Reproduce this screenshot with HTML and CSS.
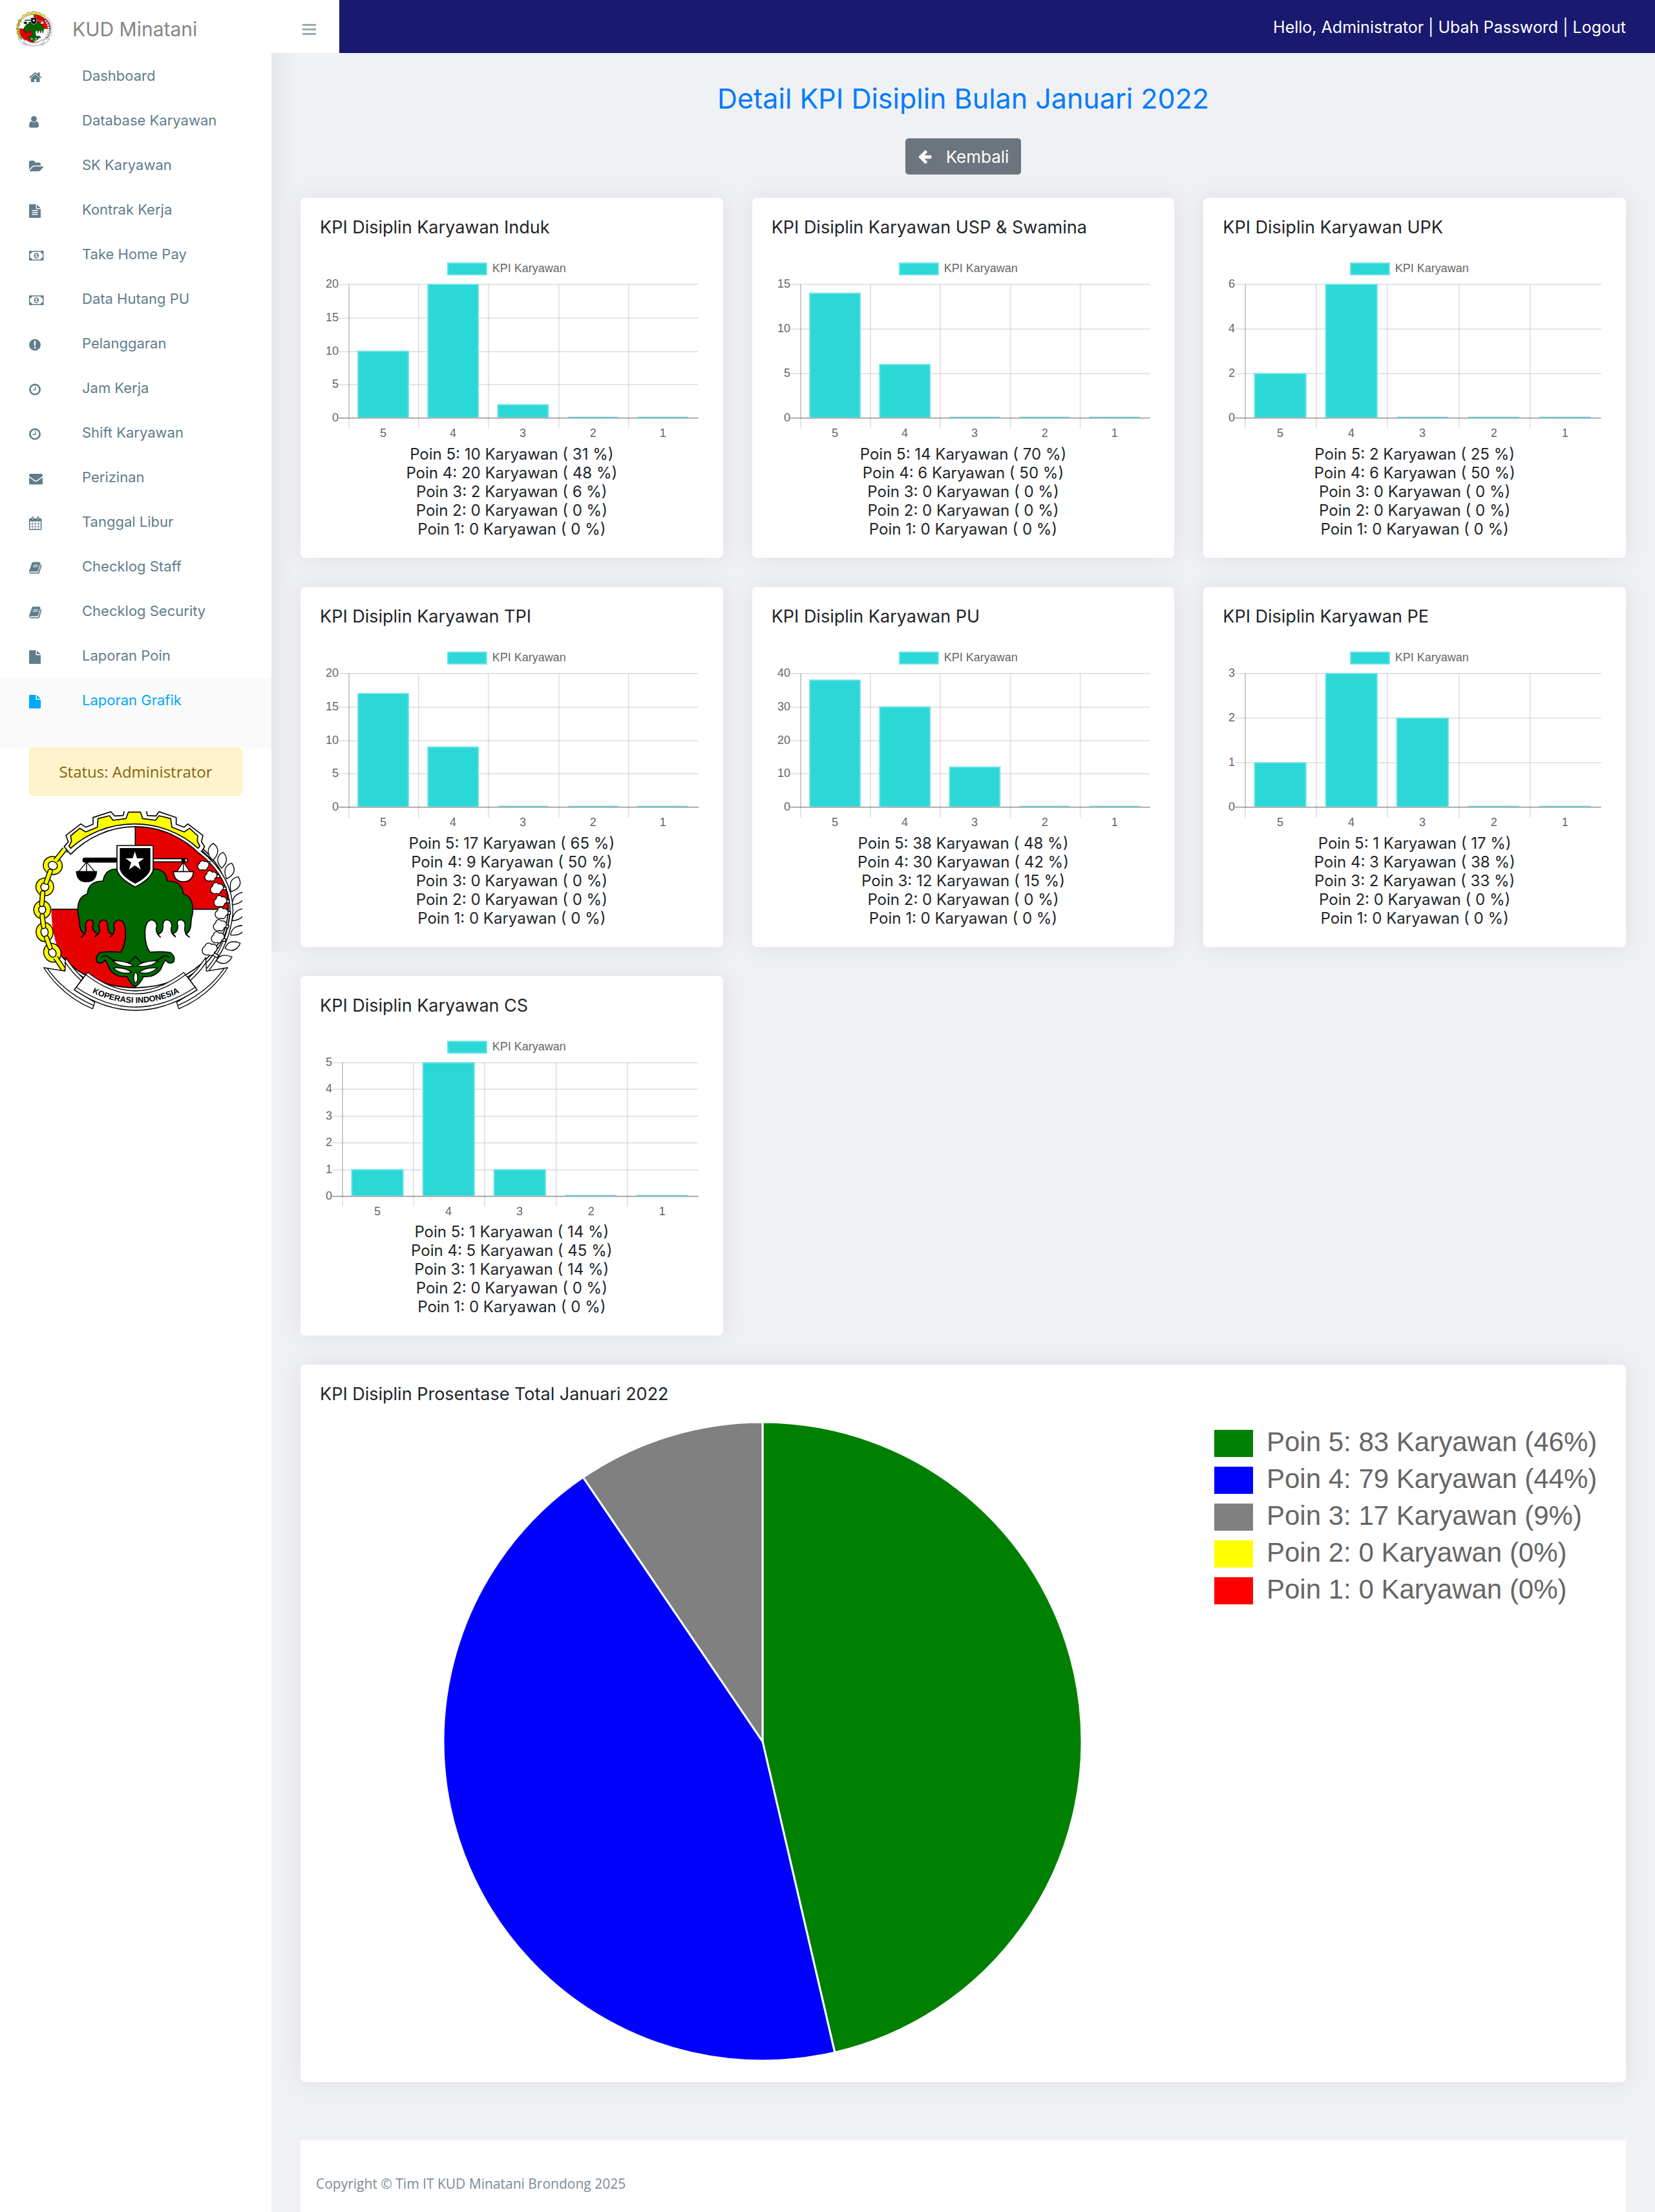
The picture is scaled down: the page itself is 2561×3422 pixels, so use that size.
FILE: index.html
```html
<!DOCTYPE html>
<html lang="id">
<head>
<meta charset="utf-8">
<meta name="viewport" content="width=device-width, initial-scale=1">
<title>KUD Minatani - Detail KPI Disiplin</title>
<link rel="stylesheet" href="styles.css">
</head>
<body>
<svg class="defs" aria-hidden="true">
  <symbol id="i-home" viewBox="64 0 2048 1792"><path d="M1472 992v480q0 26-19 45t-45 19h-384v-384h-256v384h-384q-26 0-45-19t-19-45v-480q0-1 .5-3t.5-3l575-474 575 474q1 2 1 6zm223-69l-62 74q-8 9-21 11h-3q-13 0-21-7l-692-577-692 577q-12 8-24 7-13-2-21-11l-62-74q-8-10-7-23.500t11-21.500l719-599q32-26 76-26t76 26l244 204v-195q0-14 9-23t23-9h192q14 0 23 9t9 23v408l219 182q10 8 11 21.500t-7 23.500z"/></symbol>
  <symbol id="i-user" viewBox="256 0 2048 1792"><path d="M1536 1399q0 109-62.500 187t-150.500 78h-854q-88 0-150.500-78t-62.500-187q0-85 8.500-160.500t31.500-152 58.500-131 94-89 134.500-34.500q131 128 313 128t313-128q76 0 134.500 34.500t94 89 58.500 131 31.500 152 8.500 160.500zm-256-887q0 159-112.500 271.500t-271.500 112.500-271.500-112.500-112.500-271.500 112.500-271.500 271.500-112.500 271.500 112.500 112.500 271.500z"/></symbol>
  <symbol id="i-folder" viewBox="0 0 2048 1792"><path d="M1879 952q0 31-31 66l-336 396q-43 51-120.500 86.500t-143.500 35.500h-1088q-34 0-60.500-13t-26.500-43q0-31 31-66l336-396q43-51 120.500-86.500t143.500-35.500h1088q34 0 60.500 13t26.500 43zm-343-344v160h-832q-94 0-197 47.500t-164 119.500l-337 396-5 6q0-4-.5-12.500t-.5-12.500v-960q0-92 66-158t158-66h320q92 0 158 66t66 158v32h544q92 0 158 66t66 158z"/></symbol>
  <symbol id="i-filetext" viewBox="128 0 2048 1792"><path fill-rule="evenodd" d="M1596 476q14 14 28 36h-472v-472q22 14 36 28zM1120 640h544v1056q0 40-28 68t-68 28h-1344q-40 0-68-28t-28-68v-1600q0-40 28-68t68-28h800v544q0 40 28 68t68 28zM512 768v128h768v-128zM512 1024v128h768v-128zM512 1280v128h768v-128z"/></symbol>
  <symbol id="i-file" viewBox="128 0 2048 1792"><path d="M1152 512v-472q22 14 36 28l408 408q14 14 28 36h-472zm-128 32q0 40 28 68t68 28h544v1056q0 40-28 68t-68 28h-1344q-40 0-68-28t-28-68v-1600q0-40 28-68t68-28h800v544z"/></symbol>
  <symbol id="i-money" viewBox="0 0 2048 1792"><path fill-rule="evenodd" d="M64 256h1792q64 0 64 64v1152q0 64-64 64h-1792q-64 0-64-64v-1152q0-64 64-64zM384 384q0 106-75 181t-181 75v512q106 0 181 75t75 181h1152q0-106 75-181t181-75v-512q-106 0-181-75t-75-181zM960 512c180 0 320 170 320 384s-140 384-320 384-320-170-320-384 140-384 320-384zM900 640l-130 110 70 82 60-48v240h-120v112h384v-112h-120v-384z"/></symbol>
  <symbol id="i-exclaim" viewBox="128 0 2048 1792"><path fill-rule="evenodd" d="M896 128a768 768 0 1 1 0 1536a768 768 0 1 1 0-1536zM780 380l28 640h176l28-640zM792 1150v226h208v-226z"/></symbol>
  <symbol id="i-clock" viewBox="128 0 2048 1792"><path fill-rule="evenodd" d="M896 128a768 768 0 1 1 0 1536a768 768 0 1 1 0-1536zM896 352a544 544 0 1 0 0 1088a544 544 0 1 0 0-1088zM896 512h96q32 0 32 32v448q0 32-32 32h-320q-32 0-32-32v-64q0-32 32-32h224z"/></symbol>
  <symbol id="i-mail" viewBox="0 0 2048 1792"><path d="M1792 710v794q0 66-47 113t-113 47h-1472q-66 0-113-47t-47-113v-794q44 49 101 87 362 246 497 345 57 42 92.500 65.500t94.500 48 110 24.500h2q51 0 110-24.500t94.500-48 92.500-65.500q170-123 498-345 57-39 100-87zm0-294q0 79-49 151t-122 123q-376 261-468 325-10 7-42.500 31t-54 38.500-52 32.500-57.500 27-50 9h-2q-23 0-50-9t-57.500-27-52-32.500-54-38.500-42.500-31q-91-64-262-182.500t-205-142.500q-62-42-117-115.500t-55-136.500q0-78 41.500-130t118.500-52h1472q65 0 112.500 47t47.500 113z"/></symbol>
  <symbol id="i-calendar" viewBox="64 0 2048 1792"><path fill-rule="evenodd" d="M192 256h192v-96q0-160 160-160t160 160v96h384v-96q0-160 160-160t160 160v96h192q128 0 128 128v1280q0 128-128 128h-1408q-128 0-128-128v-1280q0-128 128-128zM192 640v288h288v-288zM544 640v288h320v-288zM928 640v288h320v-288zM1312 640v288h288v-288zM192 992v320h288v-320zM544 992v320h320v-320zM928 992v320h320v-320zM1312 992v320h288v-320zM192 1376v288h288v-288zM544 1376v288h320v-288zM928 1376v288h320v-288zM1312 1376v288h288v-288zM512 128v320h64v-320zM1216 128v320h64v-320z"/></symbol>
  <symbol id="i-book" viewBox="64 0 2048 1792"><path fill-rule="evenodd" d="M1703 478q40 57 18 129l-275 906q-19 64-76.500 107.500t-122.500 43.500h-923q-77 0-148.500-53.500t-99.500-131.500q-24-67-2-127l18-110 320-930q40-184 200-184h760q100 0 148 64t22 150l-272 890q-40 150-190 150h-900q-40 0-20 60 20 70 130 70h920q60 0 80-60l310-990q20-40 0-60 70 20 103 76zM640 480l-30 96h640l30-96zM570 700l-30 96h640l30-96z"/></symbol>
  <symbol id="i-arrow" viewBox="64 0 1792 1792"><path d="M1664 896v128q0 53-32.500 90.500t-84.500 37.500h-704l293 294q38 36 38 90t-38 90l-75 76q-37 37-90 37-52 0-91-37l-651-652q-37-37-37-90 0-52 37-91l651-650q38-38 91-38 52 0 90 38l75 74q38 38 38 91t-38 91l-293 293h704q52 0 84.500 37.500t32.500 90.500z"/></symbol>
  <symbol id="emblem" viewBox="135 376 990 930">
    <g stroke="#000" stroke-width="5" stroke-linejoin="round" fill="#fff">
      <ellipse cx="628" cy="822" rx="440" ry="388"/>
      <ellipse cx="628" cy="820" rx="432" ry="375"/>
      <path fill="#e60000" d="M628 445A432 375 0 0 1 1060 831H628z"/>
      <path fill="#e60000" d="M628 1195A432 375 0 0 1 196 831H628z"/>
      <path d="M328 576L298 540L317 518L306 488L375 435L398 450L432 437V405L515 378L532 398L572 396L578 365H678L684 396L724 398L738 378L818 405V437L855 450L872 435L942 488L935 518L950 540L928 576A425 440 0 0 0 328 576z"/>
      <path fill="#ff0" d="M328 548L320 538L332 515L328 490L370 455L398 472L452 450L455 410L508 397L525 418L585 410L596 380H652L662 410L722 418L738 397L792 410L798 450L855 472L880 455L918 490L916 515L928 538L920 548A425 400 0 0 0 328 548z"/>
    </g>
    <path fill="#fff" d="M298 560L330 580Q240 680 238 831Q240 980 300 1080L300 1112L240 1090Q170 960 170 831Q170 690 298 560z"/>
    <g fill="none" stroke="#000" stroke-width="27">
      <ellipse cx="245" cy="628" rx="33" ry="30" transform="rotate(20 245 628)"/>
      <ellipse cx="208" cy="727" rx="30" ry="30" transform="rotate(10 208 727)"/>
      <ellipse cx="196" cy="833" rx="28" ry="30"/>
      <ellipse cx="207" cy="937" rx="28" ry="33" transform="rotate(-8 207 937)"/>
      <ellipse cx="243" cy="1033" rx="28" ry="33" transform="rotate(-25 243 1033)"/>
    </g>
    <g fill="none" stroke="#ff0" stroke-width="18">
      <ellipse cx="245" cy="628" rx="33" ry="30" transform="rotate(20 245 628)"/>
      <ellipse cx="208" cy="727" rx="30" ry="30" transform="rotate(10 208 727)"/>
      <ellipse cx="196" cy="833" rx="28" ry="30"/>
      <ellipse cx="207" cy="937" rx="28" ry="33" transform="rotate(-8 207 937)"/>
      <ellipse cx="243" cy="1033" rx="28" ry="33" transform="rotate(-25 243 1033)"/>
    </g>
    <g fill="none" stroke="#000" stroke-width="25" stroke-linecap="round">
      <path stroke-linecap="butt" d="M300 552L258 605M258 1055L298 1115"/>
      <path d="M233 655L215 705M198 755L194 808M196 862L202 910M216 964L232 1008"/>
      <path stroke="#ff0" stroke-width="16" stroke-linecap="butt" d="M300 552L258 605M256 1052L296 1112"/>
      <path stroke="#ff0" stroke-width="16" d="M233 655L215 705M198 755L194 808M196 862L202 910M216 964L232 1008"/>
    </g>
    <g fill="none" stroke="#000" stroke-width="17">
      <path d="M928 565Q1075 680 1075 840Q1065 990 965 1110"/>
      <path stroke="#fff" stroke-width="9" d="M926 563Q1075 680 1075 840Q1065 990 962 1114"/>
    </g>
    <g fill="#fff" stroke="#000" stroke-width="4">
      <path d="M988 603C958 575 960 545 990 525C1018 545 1018 575 988 603z"/>
      <path d="M1028 640C1000 610 1008 578 1036 567C1060 590 1054 620 1028 640z"/>
      <path d="M1052 690C1035 650 1046 625 1076 617C1096 645 1090 670 1052 690z"/>
      <path d="M1072 750C1062 705 1076 685 1106 680C1124 710 1116 735 1072 750z"/>
      <path d="M1078 810C1078 775 1096 755 1140 750C1140 785 1120 805 1078 810z"/>
      <path d="M1078 885C1080 850 1100 830 1140 826C1140 860 1120 880 1078 885z"/>
      <path d="M1070 950C1076 915 1100 905 1140 906C1134 940 1110 955 1070 950z"/>
      <path d="M1045 1012C1056 980 1080 975 1115 988C1104 1020 1075 1032 1045 1012z"/>
      <path d="M1004 1070C1020 1040 1045 1040 1077 1052C1060 1084 1035 1092 1004 1070z"/>
      <path d="M950 610h25l-4 14h-20zM990 672h30v12h-30zM1020 728h30v12h-30zM1030 788h35v12h-35zM1040 842h30v12h-30zM1035 900l28 6-3 12-28-6zM1022 960l28 10-5 12-28-10zM985 1030l30 14-6 12-28-14z"/>
    </g>
    <g fill="#fff" stroke="#000" stroke-width="4">
      <path d="M926 618a14 14 0 0 1 24-8a15 15 0 0 1 14 26a14 14 0 0 1-22 11a15 15 0 0 1-16-29z"/>
      <path d="M960 667a14 14 0 0 1 26-8a15 15 0 0 1 12 28a14 14 0 0 1-22 11a15 15 0 0 1-16-31z"/>
      <path d="M988 722a14 14 0 0 1 26-8a15 15 0 0 1 12 32a14 14 0 0 1-22 11a15 15 0 0 1-16-35z"/>
      <path d="M1004 782a14 14 0 0 1 26-8a15 15 0 0 1 12 32a14 14 0 0 1-22 11a15 15 0 0 1-16-35z"/>
      <path d="M1010 837a14 14 0 0 1 26-8a15 15 0 0 1 12 32a14 14 0 0 1-22 11a15 15 0 0 1-16-35z"/>
      <path d="M1002 894a14 14 0 0 1 26-8a15 15 0 0 1 12 32a14 14 0 0 1-22 11a15 15 0 0 1-16-35z"/>
      <path d="M992 950a14 14 0 0 1 26-8a15 15 0 0 1 12 32a14 14 0 0 1-22 11a15 15 0 0 1-16-35z"/>
      <path d="M952 1002a17 17 0 0 1 30-8a18 18 0 0 1 14 36a17 17 0 0 1-28 12a18 18 0 0 1-16-40z"/>
    </g>
    <g stroke="#000" stroke-width="5" stroke-linejoin="round">
      <g fill="#060">
        <path d="M628 640L545 645Q490 640 478 700Q410 700 405 760Q355 775 362 850Q370 880 370 905Q372 935 394 946Q378 960 376 960Q402 945 398 915Q392 885 415 880Q440 878 430 910Q430 935 454 945Q440 958 442 958Q468 940 460 915Q455 885 480 880Q500 880 500 910Q498 940 524 947Q510 960 512 960Q538 935 528 910Q528 885 552 880Q582 885 583 940Q583 1000 560 1030Q500 1025 465 1032Q440 1050 450 1075Q470 1090 488 1066Q500 1085 510 1110Q540 1150 590 1143Q600 1170 628 1192"/>
        <path transform="matrix(-1 0 0 1 1256 0)" d="M628 640L545 645Q490 640 478 700Q410 700 405 760Q355 775 362 850Q370 880 370 905Q372 935 394 946Q378 960 376 960Q402 945 398 915Q392 885 415 880Q440 878 430 910Q430 935 454 945Q440 958 442 958Q468 940 460 915Q455 885 480 880Q500 880 500 910Q498 940 524 947Q510 960 512 960Q538 935 528 910Q528 885 552 880Q582 885 583 940Q583 1000 560 1030Q500 1025 465 1032Q440 1050 450 1075Q470 1090 488 1066Q500 1085 510 1110Q540 1150 590 1143Q600 1170 628 1192"/>
        <path stroke="none" d="M618 650h20v530h-20z"/>
      </g>
      <path fill="none" d="M470 1055Q490 1035 515 1062Q560 1078 600 1078L628 1050L656 1078Q700 1078 741 1062Q766 1035 786 1055"/>
      <g fill="#fff" stroke-width="4">
        <path d="M522 1070Q560 1104 620 1094Q590 1070 522 1070zM525 1104Q565 1136 610 1124Q580 1098 525 1104z"/>
        <path d="M734 1070Q696 1104 636 1094Q666 1070 734 1070zM731 1104Q691 1136 646 1124Q676 1098 731 1104z"/>
        <ellipse cx="630" cy="1148" rx="9" ry="24"/>
      </g>
      <rect x="385" y="594" width="160" height="18" rx="9" fill="#000"/>
      <rect x="705" y="596" width="166" height="15" rx="7" fill="#fff"/>
      <circle cx="851" cy="604" r="7" fill="#000"/>
      <path fill="#fff" stroke-width="4" d="M402 612L365 657H440zM402 612V657M851 612L820 657H882zM851 612V657"/>
      <path fill="#000" d="M355 656H448Q446 703 402 703Q358 703 355 656z"/>
      <path fill="#fff" d="M805 656H898Q895 703 851 703Q808 703 805 656z"/>
      <path fill="#fff" d="M543 535H711V650Q700 690 628 728Q555 690 543 650z"/>
      <path fill="#000" stroke="none" d="M556 547H698V645Q690 680 628 712Q566 680 556 645z"/>
      <path fill="#fff" stroke="none" d="M626 563L636 594H669L643 614L653 647L626 627L599 647L609 614L583 594H616z"/>
      <g fill="#fff" stroke-width="4">
        <path d="M203 1102L302 1118L305 1055Q345 1115 385 1150L345 1205L440 1262L430 1293Q290 1235 203 1102z"/>
        <path d="M1057 1102L958 1118L955 1055Q915 1115 875 1150L915 1205L820 1262L830 1293Q970 1235 1057 1102z"/>
        <path fill="none" d="M220 1106Q300 1220 436 1278M1040 1106Q960 1220 824 1278M305 1080Q335 1125 375 1160M955 1080Q925 1125 885 1160"/>
        <path d="M407 1124Q628 1296 853 1124L915 1205Q628 1395 345 1205z"/>
        <path fill="none" d="M400 1136Q628 1312 860 1136M352 1192Q628 1378 908 1192"/>
      </g>
    </g>
  </symbol>
</svg>

<header class="topbar">
  <a class="brand" href="#"><svg class="brand-logo" aria-hidden="true"><use href="#emblem"/></svg><span>KUD Minatani</span></a>
  <button class="toggle" type="button" aria-label="Menu"><i></i><i></i><i></i></button>
  <div class="userbar"><span>Hello, Administrator | <a href="#">Ubah Password</a> | <a href="#">Logout</a></span></div>
</header>

<div class="layout">
  <aside class="sidebar">
    <nav>
      <ul class="menu">
        <li><a href="#"><svg><use href="#i-home"/></svg>Dashboard</a></li>
        <li><a href="#"><svg><use href="#i-user"/></svg>Database Karyawan</a></li>
        <li><a href="#"><svg><use href="#i-folder"/></svg>SK Karyawan</a></li>
        <li><a href="#"><svg><use href="#i-filetext"/></svg>Kontrak Kerja</a></li>
        <li><a href="#"><svg><use href="#i-money"/></svg>Take Home Pay</a></li>
        <li><a href="#"><svg><use href="#i-money"/></svg>Data Hutang PU</a></li>
        <li><a href="#"><svg><use href="#i-exclaim"/></svg>Pelanggaran</a></li>
        <li><a href="#"><svg><use href="#i-clock"/></svg>Jam Kerja</a></li>
        <li><a href="#"><svg><use href="#i-clock"/></svg>Shift Karyawan</a></li>
        <li><a href="#"><svg><use href="#i-mail"/></svg>Perizinan</a></li>
        <li><a href="#"><svg><use href="#i-calendar"/></svg>Tanggal Libur</a></li>
        <li><a href="#"><svg><use href="#i-book"/></svg>Checklog Staff</a></li>
        <li><a href="#"><svg><use href="#i-book"/></svg>Checklog Security</a></li>
        <li><a href="#"><svg><use href="#i-file"/></svg>Laporan Poin</a></li>
        <li class="active"><a href="#"><svg><use href="#i-file"/></svg>Laporan Grafik</a></li>
      </ul>
    </nav>
    <div class="status">Status: Administrator</div>
    <svg class="emblem" viewBox="135 376 990 930">
      <use href="#emblem" x="135" y="376" width="990" height="930"/>
      <path id="band" fill="none" d="M405 1207Q628 1324 856 1207"/>
      <text class="band-text"><textPath href="#band" startOffset="50%" text-anchor="middle">KOPERASI INDONESIA</textPath></text>
    </svg>
  </aside>

  <main class="content">
    <h1>Detail KPI Disiplin Bulan Januari 2022</h1>
    <button class="back" type="button"><svg aria-hidden="true"><use href="#i-arrow"/></svg>Kembali</button>

    <div class="cards">
      <section class="card">
        <h2>KPI Disiplin Karyawan Induk</h2>
        <svg class="chart" viewBox="0 0 594 297" data-values="10,20,2,0,0" data-max="20" data-step="5"></svg>
        <p>Poin 5: 10 Karyawan ( 31 %)</p><p>Poin 4: 20 Karyawan ( 48 %)</p><p>Poin 3: 2 Karyawan ( 6 %)</p><p>Poin 2: 0 Karyawan ( 0 %)</p><p>Poin 1: 0 Karyawan ( 0 %)</p>
      </section>
      <section class="card">
        <h2>KPI Disiplin Karyawan USP &amp; Swamina</h2>
        <svg class="chart" viewBox="0 0 594 297" data-values="14,6,0,0,0" data-max="15" data-step="5"></svg>
        <p>Poin 5: 14 Karyawan ( 70 %)</p><p>Poin 4: 6 Karyawan ( 50 %)</p><p>Poin 3: 0 Karyawan ( 0 %)</p><p>Poin 2: 0 Karyawan ( 0 %)</p><p>Poin 1: 0 Karyawan ( 0 %)</p>
      </section>
      <section class="card">
        <h2>KPI Disiplin Karyawan UPK</h2>
        <svg class="chart" viewBox="0 0 594 297" data-values="2,6,0,0,0" data-max="6" data-step="2"></svg>
        <p>Poin 5: 2 Karyawan ( 25 %)</p><p>Poin 4: 6 Karyawan ( 50 %)</p><p>Poin 3: 0 Karyawan ( 0 %)</p><p>Poin 2: 0 Karyawan ( 0 %)</p><p>Poin 1: 0 Karyawan ( 0 %)</p>
      </section>
      <section class="card">
        <h2>KPI Disiplin Karyawan TPI</h2>
        <svg class="chart" viewBox="0 0 594 297" data-values="17,9,0,0,0" data-max="20" data-step="5"></svg>
        <p>Poin 5: 17 Karyawan ( 65 %)</p><p>Poin 4: 9 Karyawan ( 50 %)</p><p>Poin 3: 0 Karyawan ( 0 %)</p><p>Poin 2: 0 Karyawan ( 0 %)</p><p>Poin 1: 0 Karyawan ( 0 %)</p>
      </section>
      <section class="card">
        <h2>KPI Disiplin Karyawan PU</h2>
        <svg class="chart" viewBox="0 0 594 297" data-values="38,30,12,0,0" data-max="40" data-step="10"></svg>
        <p>Poin 5: 38 Karyawan ( 48 %)</p><p>Poin 4: 30 Karyawan ( 42 %)</p><p>Poin 3: 12 Karyawan ( 15 %)</p><p>Poin 2: 0 Karyawan ( 0 %)</p><p>Poin 1: 0 Karyawan ( 0 %)</p>
      </section>
      <section class="card">
        <h2>KPI Disiplin Karyawan PE</h2>
        <svg class="chart" viewBox="0 0 594 297" data-values="1,3,2,0,0" data-max="3" data-step="1"></svg>
        <p>Poin 5: 1 Karyawan ( 17 %)</p><p>Poin 4: 3 Karyawan ( 38 %)</p><p>Poin 3: 2 Karyawan ( 33 %)</p><p>Poin 2: 0 Karyawan ( 0 %)</p><p>Poin 1: 0 Karyawan ( 0 %)</p>
      </section>
      <section class="card">
        <h2>KPI Disiplin Karyawan CS</h2>
        <svg class="chart" viewBox="0 0 594 297" data-values="1,5,1,0,0" data-max="5" data-step="1"></svg>
        <p>Poin 5: 1 Karyawan ( 14 %)</p><p>Poin 4: 5 Karyawan ( 45 %)</p><p>Poin 3: 1 Karyawan ( 14 %)</p><p>Poin 2: 0 Karyawan ( 0 %)</p><p>Poin 1: 0 Karyawan ( 0 %)</p>
      </section>
      <section class="card wide">
        <h2>KPI Disiplin Prosentase Total Januari 2022</h2>
        <div class="total">
          <svg class="pie" viewBox="0 0 1370 995" data-values="83,79,17" data-colors="green,blue,gray"></svg>
          <ul class="legend">
            <li><i class="green"></i>Poin 5: 83 Karyawan (46%)</li>
            <li><i class="blue"></i>Poin 4: 79 Karyawan (44%)</li>
            <li><i class="gray"></i>Poin 3: 17 Karyawan (9%)</li>
            <li><i class="yellow"></i>Poin 2: 0 Karyawan (0%)</li>
            <li><i class="red"></i>Poin 1: 0 Karyawan (0%)</li>
          </ul>
        </div>
      </section>
    </div>
    <footer>Copyright © Tim IT KUD Minatani Brondong 2025</footer>
  </main>
</div>
<script src="charts.js"></script>
</body>
</html>
```
FILE: charts.js
```js
const NS = 'http://www.w3.org/2000/svg';

function add(svg, tag, cls, attrs, text) {
  const el = document.createElementNS(NS, tag);
  el.setAttribute('class', cls);
  for (const key in attrs) el.setAttribute(key, attrs[key]);
  if (text !== undefined) el.textContent = text;
  svg.appendChild(el);
}

function drawBars(svg) {
  const values = svg.dataset.values.split(',').map(Number);
  const max = Number(svg.dataset.max);
  const step = Number(svg.dataset.step);
  const labelEnd = max > 9 ? 29 : 19;
  const left = labelEnd + 16;
  const right = 586, top = 49, bottom = 256;
  const pitch = (right - left) / values.length;
  const width = pitch * 0.72;
  const yOf = v => bottom - (bottom - top) * v / max;

  add(svg, 'rect', 'bar', { x: 198, y: 16, width: 60, height: 18 });
  add(svg, 'text', 'tick', { x: 267, y: 30 }, 'KPI Karyawan');

  for (let v = 0; v <= max; v += step) {
    const y = Math.round(yOf(v));
    add(svg, 'path', v ? 'grid' : 'grid zero', { d: `M${labelEnd} ${y}H${right}` });
    add(svg, 'text', 'tick end', { x: labelEnd, y: y + 5 }, v);
  }
  values.forEach((v, i) => {
    const x = Math.round(left + pitch * i);
    add(svg, 'path', i ? 'grid' : 'grid first', { d: `M${x} ${top}V${bottom}` });
    add(svg, 'path', 'grid', { d: `M${x} ${bottom}V272` });
    add(svg, 'text', 'tick mid', { x: x + pitch / 2 - 1, y: 285 }, values.length - i);
    const bx = left + pitch * i + (pitch - width) / 2 - 1;
    if (v) {
      add(svg, 'path', 'bar', { d: `M${bx} ${bottom - 1}V${yOf(v)}H${bx + width}V${bottom - 1}` });
    } else {
      add(svg, 'path', 'flat', { d: `M${bx} ${bottom - 1}h${width}` });
    }
  });
}

function drawPie(svg) {
  const values = svg.dataset.values.split(',').map(Number);
  const colors = svg.dataset.colors.split(',');
  const sum = values.reduce((a, b) => a + b, 0);
  const cx = 685, cy = 498, r = 494;
  let angle = 0;
  const point = a => `${cx + r * Math.sin(a)} ${cy - r * Math.cos(a)}`;
  values.forEach((v, i) => {
    const next = angle + v / sum * 2 * Math.PI;
    const large = next - angle > Math.PI ? 1 : 0;
    add(svg, 'path', 'slice ' + colors[i], { d: `M${cx} ${cy}L${point(angle)}A${r} ${r} 0 ${large} 1 ${point(next)}Z` });
    angle = next;
  });
}

document.querySelectorAll('.chart').forEach(drawBars);
document.querySelectorAll('.pie').forEach(drawPie);
```
FILE: styles.css
```css
* { box-sizing: border-box; }
body {
  margin: 0;
  min-height: 100vh;
  display: flex;
  flex-direction: column;
  background: #fff;
  color: #212529;
  font-family: Inter, "Open Sans", sans-serif;
}
h1, h2, p, ul { margin: 0; padding: 0; font-weight: 400; }
ul { list-style: none; }
a { color: inherit; text-decoration: none; }
button { font: inherit; border: 0; cursor: pointer; }
.defs { position: absolute; width: 0; height: 0; }

/* Top bar */
.topbar { display: flex; height: 82px; }
.brand {
  width: 420px;
  padding-left: 24px;
  display: flex;
  align-items: center;
  gap: 31px;
  padding-top: 8px;
  color: #868686;
  font-size: 30px;
  line-height: 40px;
}
.brand-logo { width: 57px; height: 56px; }
.toggle {
  width: 105px;
  padding: 8px 36px 0 48px;
  background: none;
  display: flex;
  flex-direction: column;
  justify-content: center;
  gap: 4px;
}
.toggle i { display: block; height: 3px; background: #99abb4; }
.userbar {
  flex: 1;
  padding: 2px 45px 0 0;
  display: flex;
  align-items: center;
  justify-content: flex-end;
  background: #191970;
  color: #fff;
  font-size: 25px;
}

.layout { flex: 1; display: grid; grid-template-columns: 420px 1fr; }

/* Sidebar */
.menu a {
  height: 69px;
  padding-left: 45px;
  display: flex;
  align-items: center;
  gap: 58px;
  color: #607d8b;
  font-size: 22px;
}
.menu svg { width: 24px; height: 21px; margin-top: 6px; fill: currentColor; }
.menu .active { padding-bottom: 40px; background: #fafafa; }
.menu .active a { color: #03a9f4; }
.status {
  margin: 0 45px 24px;
  padding: 20px 0;
  border: 1px solid #ffeeba;
  border-radius: 6px;
  background: #fff3cd;
  color: #856404;
  font: 24px/32px "Open Sans", sans-serif;
  text-align: center;
}
.emblem { display: block; width: 330px; height: 310px; margin-left: 45px; }
.band-text { font: bold 38px "Liberation Sans", sans-serif; fill: #000; }

/* Content */
.content {
  padding: 44px 45px 0;
  display: flex;
  flex-direction: column;
  background: linear-gradient(to right, rgba(0, 0, 0, .04), rgba(0, 0, 0, 0)) no-repeat 0 0 / 36px 1390px #f0f1f5;
}
h1 { color: #007bff; font-size: 43px; line-height: 52px; text-align: center; }
.back {
  align-self: center;
  height: 56px;
  margin: 36px 0;
  padding: 0 19px;
  display: flex;
  align-items: center;
  gap: 20px;
  border-radius: 5px;
  background: #6c757d;
  color: #fff;
  font-size: 26px;
}
.back svg { width: 24px; height: 24px; fill: #fff; }

.cards { display: grid; grid-template-columns: repeat(3, 1fr); gap: 45px; margin-bottom: 45px; }
.card {
  min-width: 0;
  padding: 30px;
  border-radius: 7px;
  background: #fff;
  box-shadow: 0 0 36px rgba(0, 0, 0, .08);
  text-align: center;
  font-size: 24px;
  line-height: 29px;
}
.wide { grid-column: 1 / -1; }
h2 { margin-bottom: 23px; font-size: 27px; line-height: 32px; text-align: left; }
.chart { display: block; width: 100%; }
.tick { font: 18px "Liberation Sans", sans-serif; fill: #666; }
.end { text-anchor: end; }
.mid { text-anchor: middle; }
.grid { stroke: rgba(0, 0, 0, .1); stroke-width: 2; fill: none; }
.first { stroke: rgba(0, 0, 0, .2); }
.zero { stroke: rgba(0, 0, 0, .33); }
.bar { fill: #2cd7d7; stroke: #6fe3e3; stroke-width: 2; }
.flat { stroke: #6cc5c7; stroke-width: 2; }

.total { display: flex; gap: 14px; }
.pie { flex: 1; min-width: 0; display: block; }
.slice { stroke: #fff; stroke-width: 3; }
.legend {
  width: 607px;
  padding-top: 16px;
  display: flex;
  flex-direction: column;
  gap: 15px;
  color: #666;
  font: 42px/38px "Liberation Sans", sans-serif;
}
.legend li { display: flex; gap: 21px; }
.legend i { width: 60px; height: 42px; }
.green { fill: #008000; background: #008000; }
.blue { fill: #00f; background: #00f; }
.gray { fill: #808080; background: #808080; }
.yellow { background: #ff0; }
.red { background: #f00; }

footer {
  margin-top: auto;
  padding: 53px 24px 30px;
  background: #fff;
  color: #7a8c95;
  font: 21px/28px "Open Sans", sans-serif;
}
```
